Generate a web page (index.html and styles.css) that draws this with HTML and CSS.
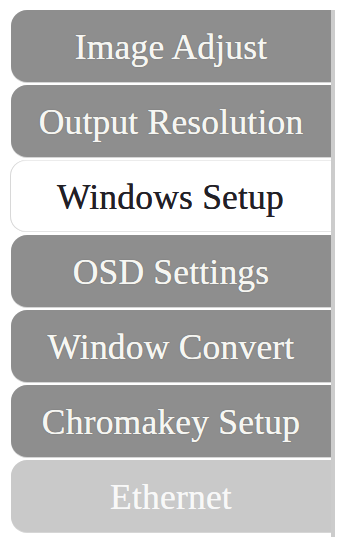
FILE: index.html
```html
<!DOCTYPE html>
<html>
<head>
<meta charset="utf-8">
<link rel="stylesheet" href="styles.css">
</head>
<body>
<nav class="menu">
  <div class="tab">Image Adjust</div>
  <div class="tab">Output Resolution</div>
  <div class="tab active">Windows Setup</div>
  <div class="tab">OSD Settings</div>
  <div class="tab">Window Convert</div>
  <div class="tab">Chromakey Setup</div>
  <div class="tab disabled">Ethernet</div>
</nav>
</body>
</html>
```
FILE: styles.css
```css
html, body {
  margin: 0;
  padding: 0;
  background: #ffffff;
}
body {
  width: 337px;
  height: 537px;
  overflow: hidden;
}
.menu {
  margin: 10px 0 0 11px;
  width: 320px;
  display: flex;
  flex-direction: column;
  gap: 3px;
  border-right: 4px solid #cccccc;
  padding-bottom: 10px;
}
.tab {
  height: 72px;
  display: flex;
  align-items: center;
  justify-content: center;
  background: #8e8e8e;
  color: #f6f6f2;
  font-family: "Liberation Serif", "Times New Roman", serif;
  font-size: 35.5px;
  letter-spacing: 0.2px;
  padding-top: 2px;
  box-sizing: border-box;
  text-shadow: 0 0 0.6px currentColor, 0 0 1.5px rgba(0, 0, 0, 0.25);
  border-radius: 16px 0 0 16px;
  white-space: nowrap;
  box-shadow: 0 1px 0 #d6d6d6;
}
.tab.active {
  background: #ffffff;
  color: #222026;
  text-shadow: 0 0 0.6px currentColor;
  box-shadow: inset 1px 0 0 #d8d8d8, inset 0 1px 0 #ececec, inset 0 -1px 0 #e4e4e4;
  margin-left: -1px;
}
.tab.disabled {
  background: #c9c9c9;
  color: #f8f8f8;
  text-shadow: 0 0 0.6px currentColor;
}
```
